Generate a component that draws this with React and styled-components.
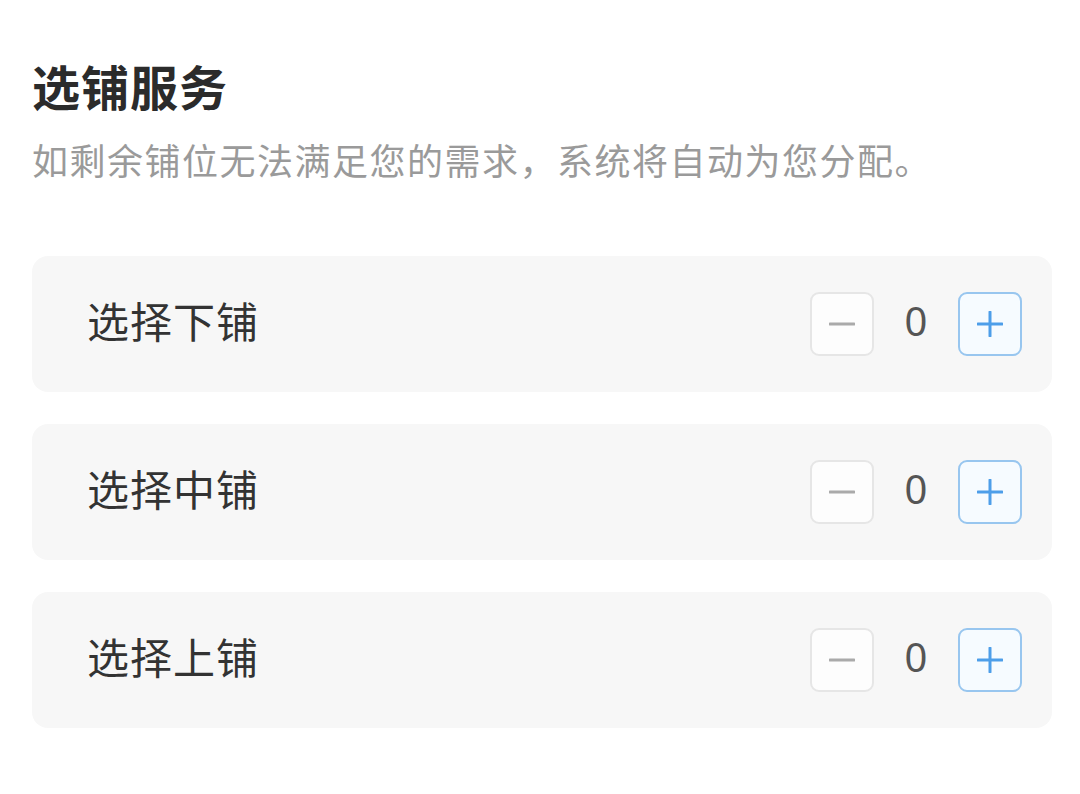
import React, { useState } from "react";
import styled, { createGlobalStyle } from "styled-components";

const GlobalStyle = createGlobalStyle`
  html, body { margin: 0; padding: 0; background: #ffffff; }
  body {
    font-family: "Noto Sans CJK SC", "Noto Sans", sans-serif;
    -webkit-font-smoothing: antialiased;
  }
`;

const Page = styled.div`
  padding: 50px 28px 0 32px;
  display: flex;
  flex-direction: column;
`;

const Title = styled.h1`
  margin: 0;
  font-size: 48px;
  line-height: 70px;
  font-weight: 700;
  color: #2b2b2b;
  letter-spacing: 1px;
`;

const Subtitle = styled.p`
  margin: 13px 0 0;
  font-size: 36px;
  line-height: 52px;
  color: #9a9a9a;
  letter-spacing: 1.5px;
`;

const List = styled.div`
  margin-top: 71px;
  display: flex;
  flex-direction: column;
  gap: 32px;
`;

const Card = styled.div`
  height: 136px;
  border-radius: 16px;
  background: #f7f7f7;
  display: flex;
  align-items: center;
  justify-content: space-between;
  padding: 0 30px 0 55px;
`;

const Label = styled.span`
  font-size: 42px;
  line-height: 60px;
  padding-bottom: 9px;
  color: #333333;
  letter-spacing: 1px;
`;

const Stepper = styled.div`
  display: flex;
  align-items: center;
`;

const StepButton = styled.button`
  width: 64px;
  height: 64px;
  box-sizing: border-box;
  border-radius: 9px;
  padding: 0;
  display: flex;
  align-items: center;
  justify-content: center;
  cursor: pointer;
  border: 2px solid ${(p) => (p.$active ? "#98c6ef" : "#e6e6e6")};
  background: ${(p) => (p.$active ? "#f6fbff" : "#fdfdfd")};
`;

const Value = styled.span`
  width: 84px;
  text-align: center;
  font-family: "Noto Sans", sans-serif;
  font-size: 40px;
  line-height: 56px;
  padding-bottom: 6px;
  color: #555555;
`;

const MinusIcon = () => (
  <svg width="26" height="26" viewBox="0 0 26 26">
    <line x1="1" y1="13" x2="25" y2="13" stroke="#aaaaaa" strokeWidth="3" strokeLinecap="round" />
  </svg>
);

const PlusIcon = () => (
  <svg width="26" height="26" viewBox="0 0 26 26">
    <line x1="1" y1="13" x2="25" y2="13" stroke="#4d9ee9" strokeWidth="3" strokeLinecap="round" />
    <line x1="13" y1="1" x2="13" y2="25" stroke="#4d9ee9" strokeWidth="3" strokeLinecap="round" />
  </svg>
);

const rows = ["选择下铺", "选择中铺", "选择上铺"];

export default function App() {
  const [counts, setCounts] = useState([0, 0, 0]);
  const change = (i, d) =>
    setCounts((c) => c.map((v, j) => (j === i ? Math.max(0, v + d) : v)));
  return (
    <>
      <GlobalStyle />
      <Page>
        <Title>选铺服务</Title>
        <Subtitle>如剩余铺位无法满足您的需求，系统将自动为您分配。</Subtitle>
        <List>
          {rows.map((r, i) => (
            <Card key={r}>
              <Label>{r}</Label>
              <Stepper>
                <StepButton onClick={() => change(i, -1)}>
                  <MinusIcon />
                </StepButton>
                <Value>{counts[i]}</Value>
                <StepButton $active onClick={() => change(i, 1)}>
                  <PlusIcon />
                </StepButton>
              </Stepper>
            </Card>
          ))}
        </List>
      </Page>
    </>
  );
}
